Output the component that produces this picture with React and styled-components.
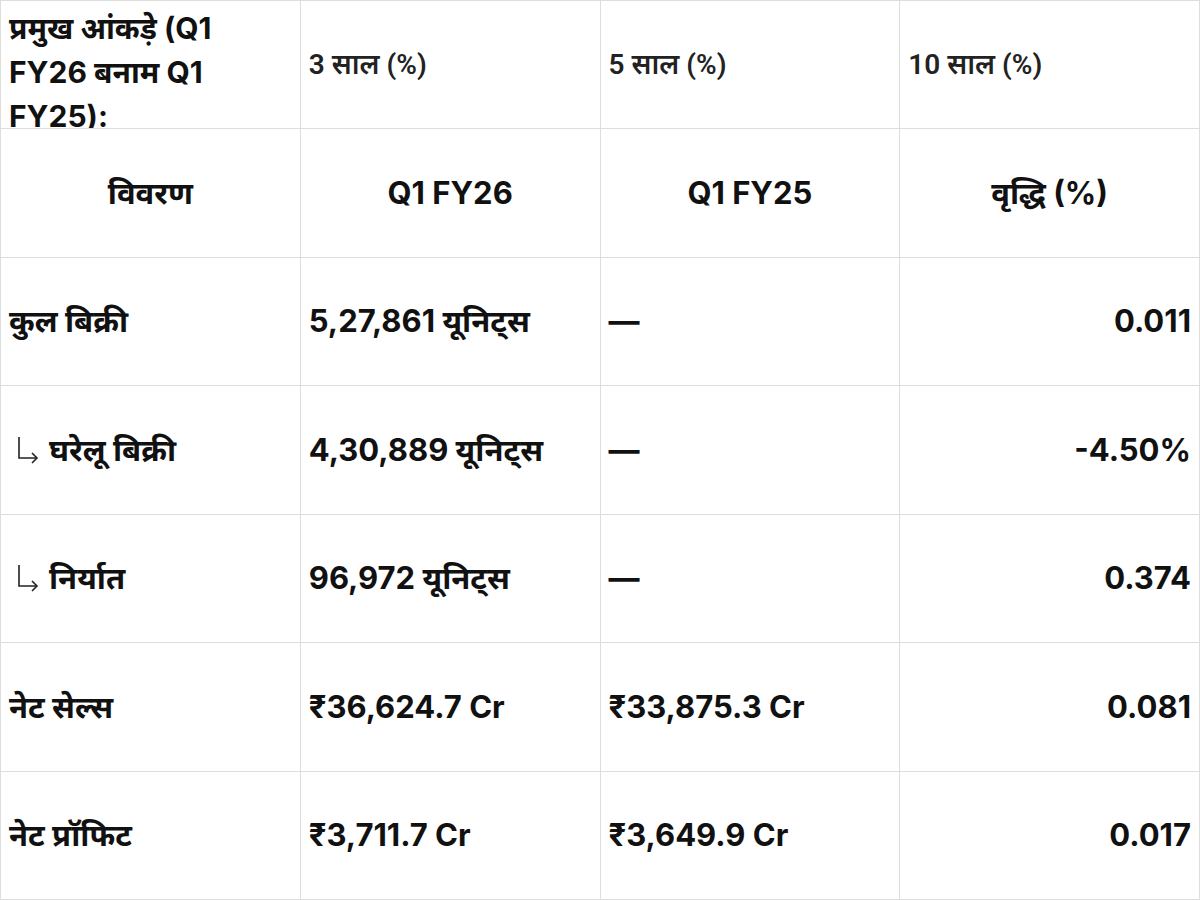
import React from "react";
import styled, { createGlobalStyle } from "styled-components";

const Global = createGlobalStyle`
  html, body { margin: 0; padding: 0; background: #fff; }
  body { font-family: Inter, "Noto Sans", "Noto Sans Devanagari", sans-serif; color: #111; }
`;

const Grid = styled.div`
  display: grid;
  grid-template-columns: repeat(4, 1fr);
  grid-template-rows: repeat(7, 1fr);
  width: 1200px;
  height: 900px;
  box-sizing: border-box;
  border-top: 1px solid #dedede;
  border-left: 1px solid #dedede;
`;

const Cell = styled.div`
  box-sizing: border-box;
  border-right: 1px solid #dedede;
  border-bottom: 1px solid #dedede;
  padding: 0 8px;
  display: flex;
  align-items: center;
  overflow: hidden;
  font-weight: 700;
  font-size: 31px;
  line-height: 1.3;
  justify-content: ${(p) => (p.$align === "right" ? "flex-end" : p.$align === "center" ? "center" : "flex-start")};
  text-align: ${(p) => p.$align || "left"};
  white-space: nowrap;
`;

const TitleCell = styled(Cell)`
  align-items: flex-start;
  white-space: normal;
  padding-top: 5px;
  font-size: 30px;
  line-height: 44px;
`;

const HeadCell = styled(Cell)`
  font-size: 28px;
  font-weight: 600;
  font-family: Roboto, "Noto Sans", sans-serif;
  color: #222;
`;

const ArrowSvg = styled.svg`
  flex: none;
  width: 22px;
  height: 28px;
  margin: 0 10px 0 8px;
  fill: none;
  stroke: #222;
  stroke-width: 1.6;
`;

const SubArrow = () => (
  <ArrowSvg viewBox="0 0 22 28" aria-hidden="true">
    <path d="M2 1 V22 H20" />
    <path d="M15 17 L20 22 L15 27" />
  </ArrowSvg>
);

const rows = [
  [{ t: "कुल बिक्री" }, "5,27,861 यूनिट्स", "—", "0.011"],
  [{ t: "घरेलू बिक्री", sub: true }, "4,30,889 यूनिट्स", "—", "-4.50%"],
  [{ t: "निर्यात", sub: true }, "96,972 यूनिट्स", "—", "0.374"],
  [{ t: "नेट सेल्स" }, "₹36,624.7 Cr", "₹33,875.3 Cr", "0.081"],
  [{ t: "नेट प्रॉफिट" }, "₹3,711.7 Cr", "₹3,649.9 Cr", "0.017"],
];

export default function App() {
  return (
    <>
      <Global />
      <Grid>
        <TitleCell>प्रमुख आंकड़े (Q1 FY26 बनाम Q1 FY25):</TitleCell>
        <HeadCell>3 साल (%)</HeadCell>
        <HeadCell>5 साल (%)</HeadCell>
        <HeadCell>10 साल (%)</HeadCell>
        {["विवरण", "Q1 FY26", "Q1 FY25", "वृद्धि (%)"].map((h) => (
          <Cell key={h} $align="center">{h}</Cell>
        ))}
        {rows.map((r, i) => (
          <React.Fragment key={i}>
            <Cell>
              {r[0].sub && <SubArrow />}
              {r[0].t}
            </Cell>
            <Cell>{r[1]}</Cell>
            <Cell>{r[2]}</Cell>
            <Cell $align="right">{r[3]}</Cell>
          </React.Fragment>
        ))}
      </Grid>
    </>
  );
}
